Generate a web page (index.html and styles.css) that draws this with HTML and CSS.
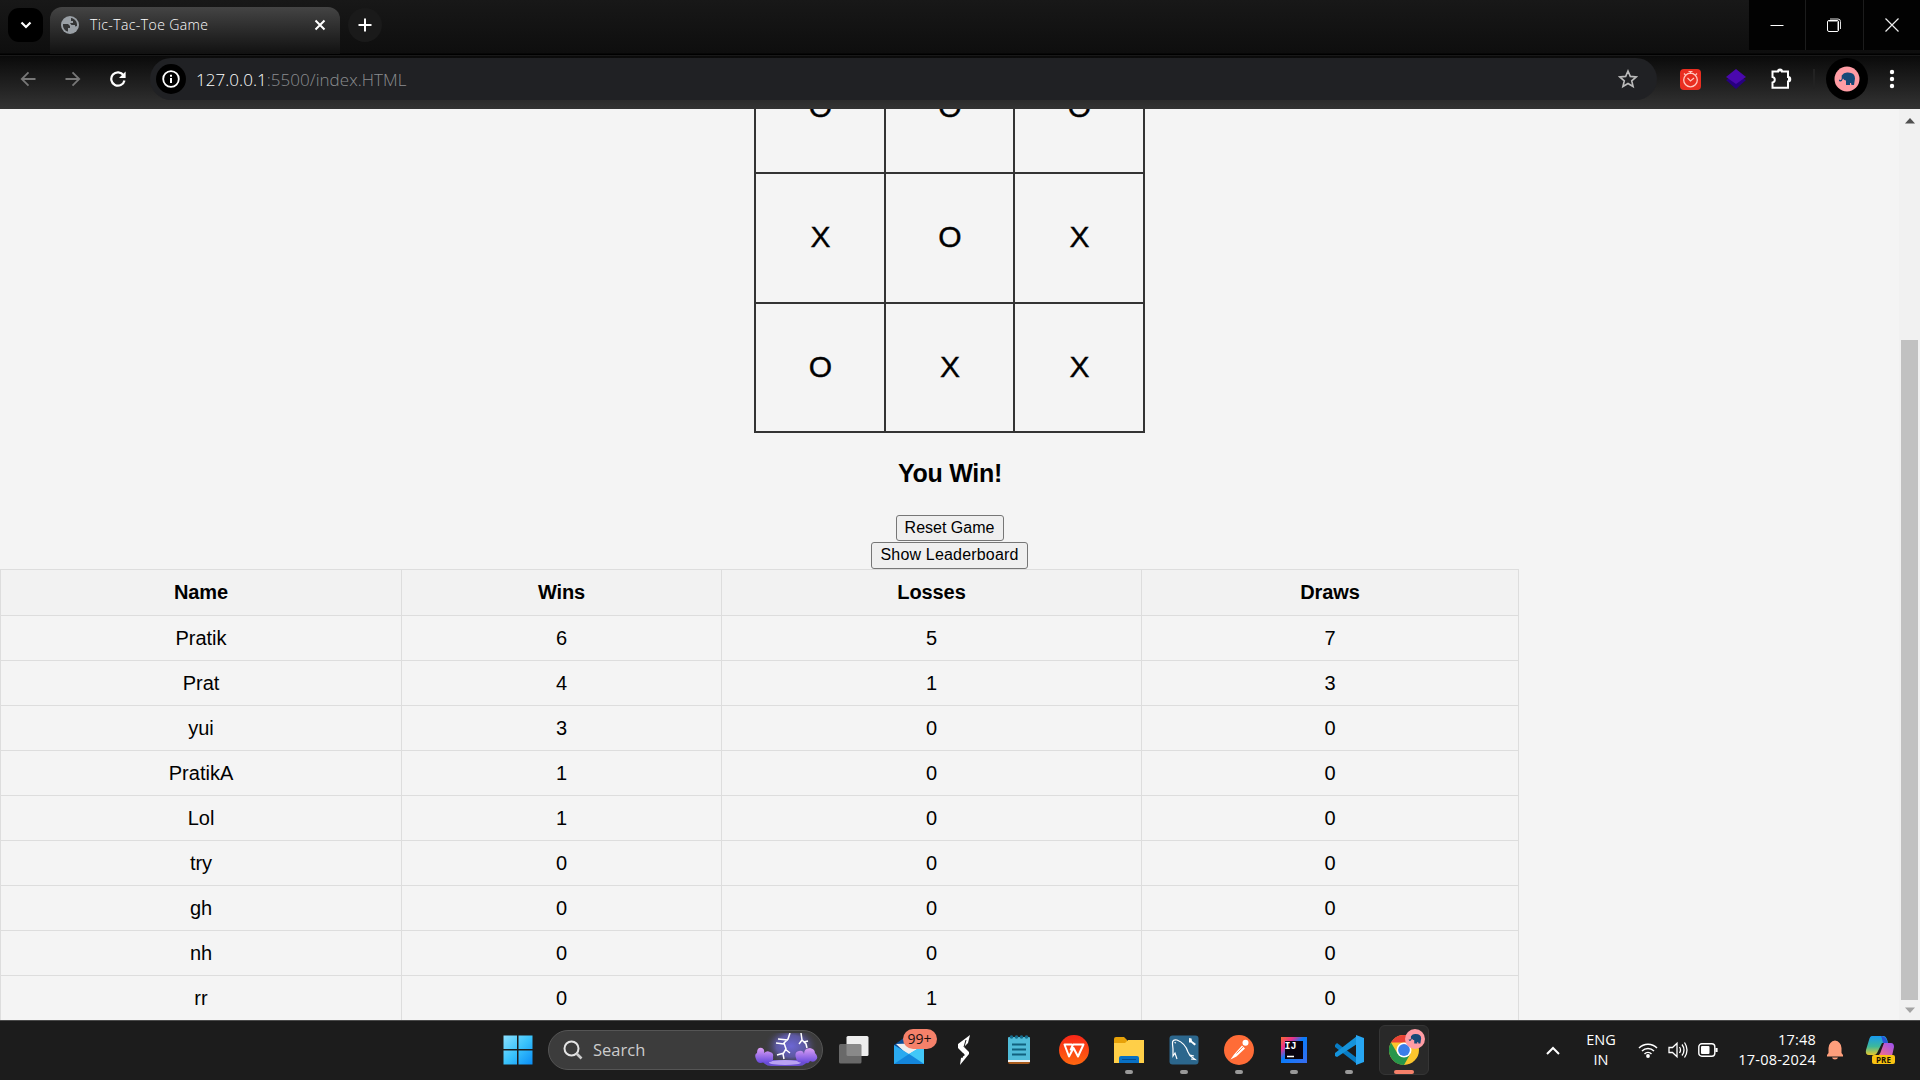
FILE: index.html
```html
<!DOCTYPE html>
<html lang="en">
<head>
<meta charset="utf-8">
<title>Tic-Tac-Toe Game</title>
<link rel="stylesheet" href="styles.css">
</head>
<body>
<header class="tabstrip">
  <div class="tabmenu"><svg width="12" height="8" viewBox="0 0 12 8"><path d="M1.500 1.500 6 6l4.500-4.500" fill="none" stroke="#fff" stroke-width="2.200"/></svg></div>
  <div class="tab">
    <svg width="18" height="18" viewBox="0 0 18 18"><circle cx="9" cy="9" r="9" fill="#9aa0a6"/><path d="M2 8h5l2 2v2H7v3.500C4 15 1.500 12 2 8zM10 2c4 .5 6.500 4 6 8l-2 .5V9h-3.500L9 7h3V5h-2z" fill="#343536"/></svg>
    <span class="tabtitle">Tic-Tac-Toe Game</span>
    <svg width="12" height="12" viewBox="0 0 12 12"><path d="m1.500 1.500 9 9m0-9-9 9" stroke="#fff" stroke-width="2"/></svg>
  </div>
  <div class="newtab"><svg width="14" height="14" viewBox="0 0 14 14"><path d="M7 .5v13M.5 7h13" stroke="#fff" stroke-width="2"/></svg></div>
  <div class="wincontrols">
    <div class="winbtn"><svg width="14" height="14" viewBox="0 0 14 14"><path d="M.5 7.500h13" stroke="#fff"/></svg></div>
    <div class="winbtn"><svg width="14" height="14" viewBox="0 0 14 14"><path d="M3 1h8q2.500 0 2.500 2.500V11" fill="none" stroke="#ddd"/><rect x=".5" y="2.500" width="11" height="11" rx="1.500" fill="#020202" stroke="#fff"/><path d="M2 3.500h8.500V12" fill="none" stroke="#777"/></svg></div>
    <div class="winbtn"><svg width="14" height="14" viewBox="0 0 14 14"><path d="m.5.5 13 13m0-13-13 13" stroke="#eee" stroke-width="1.200"/></svg></div>
  </div>
</header>
<nav class="toolbar">
  <div class="nav"><svg width="16" height="16" viewBox="0 0 16 16"><path d="M15.500 8H2m6.500-6.700L1.800 8l6.700 6.700" fill="none" stroke="#777" stroke-width="1.800"/></svg></div>
  <div class="nav"><svg width="16" height="16" viewBox="0 0 16 16"><path d="M.5 8H14M7.500 1.300 14.200 8l-6.700 6.700" fill="none" stroke="#777" stroke-width="1.800"/></svg></div>
  <div class="nav reload"><svg width="16" height="16" viewBox="0 0 16 16"><path d="M14.500 9.500A6.700 6.700 0 1 1 13.500 4.200" fill="none" stroke="#fff" stroke-width="2.200"/><path d="M15.600.5v6.600H9z" fill="#fff"/></svg></div>
  <div class="omnibox">
    <div class="siteinfo"><svg width="18" height="18" viewBox="0 0 18 18"><circle cx="9" cy="9" r="7.800" fill="none" stroke="#fff" stroke-width="1.800"/><path d="M9 8v5M9 4.700v2" stroke="#fff" stroke-width="2"/></svg></div>
    <span class="url"><b>127.0.0.1</b><i>:5500/index.HTML</i></span>
    <svg width="20" height="20" viewBox="0 0 20 20"><path d="m10 2 2.300 5.400 5.900.5-4.500 3.900 1.400 5.700-5.100-3-5.100 3 1.400-5.700-4.500-3.900 5.900-.5z" fill="none" stroke="#bbb" stroke-width="1.600"/></svg>
  </div>
  <div class="ext"><svg width="21" height="21" viewBox="0 0 21 21"><rect width="21" height="21" rx="4" fill="#ea2e20"/><circle cx="10.500" cy="11" r="6.800" fill="none" stroke="#ffc9c0" stroke-width="1.300"/><path d="M8.500 2.500h4M10.500 2.500V5M4 4.500l1.500 1.500M17 4.500 15.500 6M7.500 9l3 3 3.500-3" fill="none" stroke="#ffc9c0" stroke-width="1.200"/></svg></div>
  <div class="ext"><svg width="22" height="22" viewBox="0 0 22 22"><path d="M1 12 11 7l10 5-10 9z" fill="#270080"/><path d="M1 9 11 1l10 8-10 7z" fill="#4a08ad"/></svg></div>
  <div class="ext"><svg width="22" height="22" viewBox="0 0 22 22"><path d="M2.500 3.500H8a2 2 0 0 1 4 0h6V9a2.200 2.200 0 0 1 0 4.500v6.300H2.500v-5.300a2.800 2.800 0 0 0 0-5.500z" fill="none" stroke="#fff" stroke-width="2"/><path d="M8 3.500a2 2 0 0 1 4 0zM18 9a2.200 2.200 0 0 1 0 4.500z" fill="#fff"/></svg></div>
  <div class="divider"></div>
  <div class="profile"><svg width="26" height="26" viewBox="0 0 26 26"><circle cx="13" cy="13" r="12.500" fill="#ff9ca4"/><path d="M5 12.500c0 2 2.500 2 2.700 0V9.500Q10 6 14 6.500q7 0 7 6l-1 6.500h-2.500l-.5-2h-1v2h-4v-4.500q-2 0-3-2-1 3.500-3 3Q4.500 15 5 12.500z" fill="#164978"/></svg></div>
  <div class="dots"><svg width="6" height="20" viewBox="0 0 6 20"><circle cx="3" cy="3" r="2.200"/><circle cx="3" cy="10" r="2.200"/><circle cx="3" cy="17" r="2.200"/></svg></div>
</nav>
<main class="viewport">
  <section class="page">
    <div class="board">
      <div class="cell">O</div><div class="cell">O</div><div class="cell">O</div>
      <div class="cell">X</div><div class="cell">O</div><div class="cell">X</div>
      <div class="cell">O</div><div class="cell">X</div><div class="cell">X</div>
    </div>
    <h2 class="result">You Win!</h2>
    <button class="btn reset">Reset Game</button>
    <button class="btn show">Show Leaderboard</button>
    <table class="scores">
      <colgroup><col class="c1"><col class="c2"><col class="c3"><col class="c4"></colgroup>
      <tr><th>Name</th><th>Wins</th><th>Losses</th><th>Draws</th></tr>
      <tr><td>Pratik</td><td>6</td><td>5</td><td>7</td></tr>
      <tr><td>Prat</td><td>4</td><td>1</td><td>3</td></tr>
      <tr><td>yui</td><td>3</td><td>0</td><td>0</td></tr>
      <tr><td>PratikA</td><td>1</td><td>0</td><td>0</td></tr>
      <tr><td>Lol</td><td>1</td><td>0</td><td>0</td></tr>
      <tr><td>try</td><td>0</td><td>0</td><td>0</td></tr>
      <tr><td>gh</td><td>0</td><td>0</td><td>0</td></tr>
      <tr><td>nh</td><td>0</td><td>0</td><td>0</td></tr>
      <tr><td>rr</td><td>0</td><td>1</td><td>0</td></tr>
    </table>
  </section>
  <aside class="scrollbar">
    <svg width="10" height="6" viewBox="0 0 10 6"><path d="M0 5.500 5 0l5 5.500z" fill="#505050"/></svg>
    <div class="thumb"></div>
    <svg width="10" height="6" viewBox="0 0 10 6"><path d="M0 .5 5 6l5-5.500z" fill="#a3a3a3"/></svg>
  </aside>
</main>
<footer class="taskbar">
  <svg class="start" width="30" height="30" viewBox="0 0 30 30"><defs><linearGradient id="win" x2="1" y2="1"><stop stop-color="#8be0ff"/><stop offset=".5" stop-color="#3ac3fb"/><stop offset="1" stop-color="#0a8df5"/></linearGradient></defs><path d="M.5.5H14V14H.5zM15.500.5h14V14h-14zM.5 15.500H14v14H.5zM15.500 15.500h14v14h-14z" fill="url(#win)"/></svg>
  <div class="search">
    <svg width="20" height="20" viewBox="0 0 20 20"><circle cx="8.500" cy="8.500" r="7" fill="none" stroke="#e4e4e4" stroke-width="2"/><path d="m13.500 13.500 5 5" stroke="#ccc" stroke-width="2.600"/></svg>
    <span class="searchtext">Search</span>
    <svg width="63" height="34" viewBox="0 0 63 34">
      <defs><radialGradient id="sky"><stop stop-color="#6c66d4"/><stop offset=".55" stop-color="#5c589e"/><stop offset="1" stop-color="#3c3b40" stop-opacity="0"/></radialGradient><linearGradient id="tree" x2="0" y2="1"><stop stop-color="#dda0f6"/><stop offset="1" stop-color="#6346db"/></linearGradient></defs>
      <ellipse cx="36" cy="13" rx="27" ry="20" fill="url(#sky)"/>
      <path d="M5 27h50l-5 4q-2 2-6 2H16q-4 0-6-2z" fill="#6a4fd0"/>
      <ellipse cx="30" cy="29.500" rx="16" ry="2.600" fill="#b9a2f2"/>
      <path d="M1 26q-2-5 1-6 0-6 5-5 3 1 2 5 3-3 6-1 4 1 3 5 1 5-4 5-2 3-5 0-6 3-8-3zM41 25q-2-6 3-7 4-1 5 3 0-6 6-6 5 1 5 5 4 4 1 7-2 3-6 1-2 4-6 1-7 2-8-4z" fill="url(#tree)"/>
      <path d="m35 0-2 6-4 4 2 6-3 5 1 5M33 7l-10-1M29 11l-8-1m9 6 5 4m-6 0-7 2M46 0l1 7 4 4 1 4m-5-8-3 4m5-2 4-1" fill="none" stroke="#fff" stroke-width="1.500"/>
    </svg>
  </div>
  <div class="apps">
    <div class="app"><svg width="30" height="30" viewBox="0 0 30 30"><rect x="7.500" y="1" width="22" height="20" rx="1.500" fill="#eee"/><rect x="0" y="9" width="22.500" height="19.500" rx="1.500" fill="#777" fill-opacity=".85"/></svg></div>
    <div class="app"><svg width="30" height="30" viewBox="0 0 30 30"><path d="M0 10 14 0l16 10v6H0z" fill="#0a4c97"/><path d="m2 9 25-1v7L15 21z" fill="#eee"/><path d="m0 10 15 9L30 10v19H0z" fill="#2aaaf0"/><path d="m30 10-15 9 15 10z" fill="#42c8f8"/><path d="m0 29 15-10 15 10z" fill="#1486dc"/></svg><span class="badge">99+</span></div>
    <div class="app"><svg width="30" height="30" viewBox="0 0 30 30"><path d="M21 0 19 8 15 12 20 17 20 19 11 30 12 23 16 20 9 13V9z" fill="#fff"/><path d="m17 5-2 7M14 18l-1 5" stroke="#1c1c1c"/></svg></div>
    <div class="app"><svg width="24" height="30" viewBox="0 0 24 30"><rect x="1" y="3" width="22" height="26" rx="2" fill="#a85c1d"/><rect x="1" y="2" width="22" height="25" rx="1" fill="#50bcd9"/><path d="M1 25h22v2H1z" fill="#f2f2f2"/><path d="M5 9.500h14M5 14.500h14M5 19.500h14" stroke="#11617e" stroke-width="2"/><g fill="#176d8d"><circle cx="4.500" cy="2" r="1.800"/><circle cx="9.500" cy="2" r="1.800"/><circle cx="14.500" cy="2" r="1.800"/><circle cx="19.500" cy="2" r="1.800"/></g></svg></div>
    <div class="app"><svg width="30" height="30" viewBox="0 0 30 30"><defs><linearGradient id="wps" x2="0" y2="1"><stop stop-color="#f82618"/><stop offset="1" stop-color="#ff6810"/></linearGradient></defs><circle cx="15" cy="15" r="15" fill="url(#wps)"/><path d="M13 9.500H5.500L10 21.500l4.500-8.500 4.500 8.500 5.500-12H14l-2.500 6" fill="none" stroke="#fff" stroke-width="2" stroke-linejoin="round"/></svg></div>
    <div class="app run"><svg width="30" height="30" viewBox="0 0 30 30"><path d="M0 4q0-2 2-2h8l3 3v6H0z" fill="#e7a108"/><path d="M0 8h11l3-3h16v23H0z" fill="#ffcf48"/><path d="M5 28v-5q0-2 2-2h16q2 0 2 2v5z" fill="#0870c4"/><path d="M8 24.500h14" stroke="#044b8e"/></svg></div>
    <div class="app run"><svg width="30" height="30" viewBox="0 0 30 30"><rect x=".5" y=".5" width="29" height="29" rx="3" fill="#2c678d"/><path d="M8 24 6 18l-2 3 0-7-.5-5Q3 4 8 5q8 3 11 12l2 3.500 5 4-4-.5M21 20l4 1M7 8 5.500 7.500" fill="none" stroke="#fff" stroke-width="1.200"/><path d="m20 3 2.500.5L23 6l4 3-1.500 1.500-3.500-3-2 0z" fill="#fff"/></svg></div>
    <div class="app run"><svg width="30" height="30" viewBox="0 0 30 30"><circle cx="15" cy="15" r="15" fill="#ff6c37"/><path d="m6.500 24.500 3.500-5 8-9 3 3-8.500 8zM18 10l3 3" fill="#fff"/><circle cx="21.500" cy="7.800" r="3" fill="#fff"/><path d="m12.500 18.500 7-7" stroke="#ff6c37" stroke-width=".8"/></svg></div>
    <div class="app run"><svg width="28" height="28" viewBox="0 0 28 28"><defs><linearGradient id="ij" x2="1" y2="1"><stop stop-color="#fb6b32"/><stop offset=".25" stop-color="#e8318c"/><stop offset=".45" stop-color="#087cfa"/><stop offset="1" stop-color="#396cf0"/></linearGradient></defs><rect x="1" y="1" width="26" height="26" fill="url(#ij)"/><rect x="5" y="5" width="18" height="18" fill="#080310"/><path d="M7 20.500h7" stroke="#fff" stroke-width="1.500"/></svg><span class="ijtext">IJ</span></div>
    <div class="app run"><svg width="30" height="30" viewBox="0 0 30 30"><path d="m1 10 2-2 20 15v6L1 12z" fill="#087cc4"/><path d="M23 1v8L3 22l-2-1v-3z" fill="#1593db"/><path d="M22 0 30 3v24l-8 3z" fill="#27a6f2"/></svg></div>
    <div class="app active"><svg width="30" height="30" viewBox="0 0 30 30"><circle cx="15" cy="15" r="15" fill="#fbc52d"/><path d="M2 7.500A15 15 0 0 1 28 7.500H15z" fill="#e94235"/><path d="M2 7.500A15 15 0 0 0 15 30l6.500-11.500L15 15 8.500 18.500z" fill="#27964b"/><circle cx="15" cy="15" r="7.500" fill="#fff"/><circle cx="15" cy="15" r="5.900" fill="#3b7ee9"/></svg>
      <svg class="avatar" width="20" height="20" viewBox="0 0 26 26"><circle cx="13" cy="13" r="13" fill="#ff9ca4"/><path d="M5 12.500c0 2 2.500 2 2.700 0V9.500Q10 6 14 6.500q7 0 7 6l-1 6.500h-2.500l-.5-2h-1v2h-4v-4.500q-2 0-3-2-1 3.500-3 3Q4.500 15 5 12.500z" fill="#164978"/></svg></div>
  </div>
  <div class="tray">
    <svg class="chev" width="14" height="9" viewBox="0 0 14 9"><path d="m1 8 6-6 6 6" fill="none" stroke="#fff" stroke-width="2"/></svg>
    <div class="lang">ENG<br>IN</div>
    <svg width="20" height="16" viewBox="0 0 20 16"><path d="M1 6a12.500 12.500 0 0 1 18 0M4 9a8.500 8.500 0 0 1 12 0M6.500 12a5 5 0 0 1 7 0" fill="none" stroke="#fff" stroke-width="1.500"/><circle cx="10" cy="14" r="1.900" fill="#fff"/></svg>
    <svg class="vol" width="20" height="18" viewBox="0 0 20 18"><path d="M1 6.500h3.500L9 2.200v13.600L4.500 11.500H1zM11.500 6q2 3 0 6M14 3.500q4 5.500 0 11M16.500 1.500q5 7.500 0 15" fill="none" stroke="#fff" stroke-width="1.300"/></svg>
    <svg class="batt" width="20" height="14" viewBox="0 0 20 14"><rect x=".8" y=".8" width="16" height="12.400" rx="3" fill="none" stroke="#fff" stroke-width="1.400"/><rect x="3" y="3" width="8.500" height="8" rx="1" fill="#fff"/><path d="M18.500 5v4" stroke="#fff" stroke-width="2.200"/></svg>
    <div class="clock">17:48<br>17-08-2024</div>
    <svg class="bell" width="18" height="20" viewBox="0 0 18 20"><path d="M1 16.500v-1.500l1.500-2V8q.5-6.500 6.500-7.500 6 1 6.500 7.500v5l1.500 2v1.500zM6 17.500h6q-.5 2-3 2t-3-2z" fill="#ff9f7c"/></svg>
    <div class="copilot"><svg width="30" height="28" viewBox="0 0 30 28"><defs><linearGradient id="ca" x2="0" y2="1"><stop stop-color="#189af0"/><stop offset=".55" stop-color="#3cb89b"/><stop offset="1" stop-color="#e8c82c"/></linearGradient><linearGradient id="cb" x1="1" x2="0" y2="1"><stop stop-color="#9850f4"/><stop offset="1" stop-color="#ff7180"/></linearGradient></defs><path d="M7 0h12q3 1 4 7h-6l-5 10q-1 2-3 2H4q-4 0-3-5L4 4q1-4 3-4z" fill="url(#ca)"/><path d="M16 0q5 0 7 7h-5q-1-5-2-7z" fill="#2856d8"/><path d="M19 7h7q3 0 3 4l-2 9H12q3-1 4-5z" fill="url(#cb)"/></svg><span class="pre">PRE</span></div>
  </div>
</footer>
</body>
</html>
```
FILE: styles.css
```css
* { box-sizing: border-box; }
body { margin: 0; width: 1920px; height: 1080px; overflow: hidden; display: flex; flex-direction: column; font-family: "Liberation Sans", Arial, sans-serif; color: #000; background: #f4f4f4; }
svg { display: block; flex: none; }
.tabstrip { height: 57px; flex: none; display: flex; align-items: flex-start; background: linear-gradient(#181818, #0e0e0e 53px, #000 54px, #000 55px, #1d1d1d 55px, #141414 56px, #000 57px); font-family: "Open Sans", "Noto Sans", sans-serif; }
.tabmenu { width: 35px; height: 34px; margin: 8px 7px 0 8px; border-radius: 11px; background: #000; display: flex; align-items: center; justify-content: center; }
.tab { width: 290px; height: 47px; margin-top: 7px; padding: 0 14px 11px 11px; border-radius: 12px 12px 0 0; background: linear-gradient(#444, #111); display: flex; align-items: center; }
.tabtitle { flex: 1; margin-left: 11px; color: #fff; font-size: 14px; font-weight: 300; letter-spacing: .4px; line-height: 20px; white-space: nowrap; }
.newtab { width: 34px; height: 34px; margin: 8px 0 0 8px; border-radius: 50%; background: #1a1a1a; display: flex; align-items: center; justify-content: center; }
.wincontrols { margin-left: auto; display: grid; grid-template-columns: 56px 57px 56px; column-gap: 1px; height: 50px; background: #1c1c1c; }
.winbtn { padding-right: 1px; background: #020202; display: flex; align-items: center; justify-content: center; }
.toolbar { height: 52px; flex: none; display: flex; align-items: center; padding: 0 6px 8px; background: linear-gradient(#0b0b0b, #333); font-family: "Open Sans", "Noto Sans", sans-serif; }
.nav { width: 44.500px; display: flex; justify-content: center; }
.reload { padding-left: 1px; }
.omnibox { width: 1507px; height: 42px; margin-left: 10.500px; padding: 0 19px 0 6px; border-radius: 21px; background: #202124; display: flex; align-items: center; }
.siteinfo { width: 30px; height: 30px; border-radius: 50%; background: #000; display: flex; align-items: center; justify-content: center; }
.url { flex: 1; margin-left: 10px; font-size: 17px; line-height: 24px; letter-spacing: .04px; padding-top: 1px; white-space: nowrap; }
.url b { color: #fff; font-weight: 300; }
.url i { color: #8b8d90; font-style: normal; font-weight: 300; }
.ext { width: 45px; display: flex; justify-content: center; }
.ext:nth-of-type(5) { margin-left: 11px; }
.divider { width: 2px; height: 20px; margin-left: 10px; background: #222; }
.profile { width: 42px; height: 42px; margin-left: 11px; border-radius: 50%; background: #000; display: flex; align-items: center; justify-content: center; }
.dots { margin-left: 21px; fill: #fff; }
.viewport { flex: 1; min-height: 0; display: flex; }
.page { width: 1899px; height: 911px; overflow: hidden; display: flex; flex-direction: column; align-items: center; }
.board { flex: none; margin-top: -67px; display: grid; grid-template-columns: 128px 127px 128px; grid-template-rows: 128px 128px 127px; gap: 2px; padding: 2px; background: #333; }
.cell { padding: 0 0 2px 1px; background: #f4f4f4; font-size: 30px; display: flex; align-items: center; justify-content: center; -webkit-text-stroke: .4px #000; }
.result { flex: none; height: 82px; margin: 0; padding: 25px 0 0 1px; font-size: 25px; line-height: 30px; letter-spacing: -0.3px; }
.btn { flex: none; padding: 0; border: 1px solid #767676; border-radius: 3px; background: #efefef; color: #000; font: 16px "Liberation Sans", Arial, sans-serif; white-space: nowrap; }
.reset { width: 108px; height: 26px; }
.show { width: 157px; height: 27px; margin-top: 1px; padding-bottom: 2px; letter-spacing: .18px; }
.scores { flex: none; align-self: flex-start; width: 1519px; table-layout: fixed; border-collapse: separate; border-spacing: 0; border-left: 1px solid #ddd; border-top: 1px solid #ddd; font-size: 20px; text-align: center; }
.c1 { width: 401px; }
.c2 { width: 320px; }
.c3 { width: 420px; }
.c4 { width: 377px; }
.scores th, .scores td { height: 45px; padding: 0; border-right: 1px solid #ddd; border-bottom: 1px solid #ddd; line-height: 24px; }
.scores th { height: 46px; padding-bottom: 2px; background: #f2f2f2; letter-spacing: -0.1px; }
.scrollbar { width: 21px; padding: 9px 0 7px; background: #f1f1f1; display: flex; flex-direction: column; align-items: center; }
.thumb { width: 17px; height: 660px; margin: auto 0 7px; background: #c1c1c1; }
.taskbar { height: 60px; flex: none; display: flex; align-items: center; background: linear-gradient(#4a4a4a 1px, #1c1c1c 1px); color: #fff; font-family: "Open Sans", "Noto Sans", sans-serif; }
.start { margin-left: 502.500px; }
.search { width: 275px; height: 40px; margin-left: 15.500px; padding: 0 4px 0 14px; border: 1px solid #555; border-radius: 20px; background: #3c3c3c; display: flex; align-items: center; }
.searchtext { flex: 1; margin-left: 10px; color: #ccc; font-size: 16.500px; line-height: 24px; }
.apps { display: flex; margin-left: 3.500px; }
.app { position: relative; width: 55px; height: 50px; display: flex; align-items: center; justify-content: center; }
.badge { position: absolute; left: 21px; top: 4px; width: 34px; height: 20px; border-radius: 10px; background: #f5816a; color: #191010; font-size: 14px; line-height: 20px; text-align: center; }
.run::after { content: ""; position: absolute; left: 23px; bottom: 1px; width: 8px; height: 4px; border-radius: 2px; background: #999; }
.active { background: #292929; border: 1px solid #353535; border-radius: 6px; width: 50px; margin-left: 2.500px; }
.active::after { content: ""; position: absolute; left: 14px; bottom: 0; width: 20px; height: 4px; border-radius: 2px; background: #f5816a; }
.avatar { position: absolute; left: 25px; top: 3px; }
.ijtext { position: absolute; left: 18px; top: 15px; color: #fff; font: bold 10px/14px "Liberation Mono", monospace; }
.tray { flex: 1; display: flex; align-items: center; font-size: 14.500px; line-height: 20px; }
.chev { margin-left: 117px; }
.lang { width: 40px; margin-left: 21px; text-align: center; }
.lang + svg { margin-left: 17px; }
.vol { margin-left: 10px; }
.batt { margin-left: 10px; }
.clock { width: 98px; text-align: right; letter-spacing: .2px; white-space: nowrap; }
.bell { margin-left: 10px; }
.copilot { position: relative; margin-left: 21px; }
.pre { position: absolute; left: 7px; top: 19px; width: 23px; height: 9px; border-radius: 2px; background: #f9c312; color: #191400; font-size: 8px; font-weight: 700; line-height: 9px; text-align: center; }
```
